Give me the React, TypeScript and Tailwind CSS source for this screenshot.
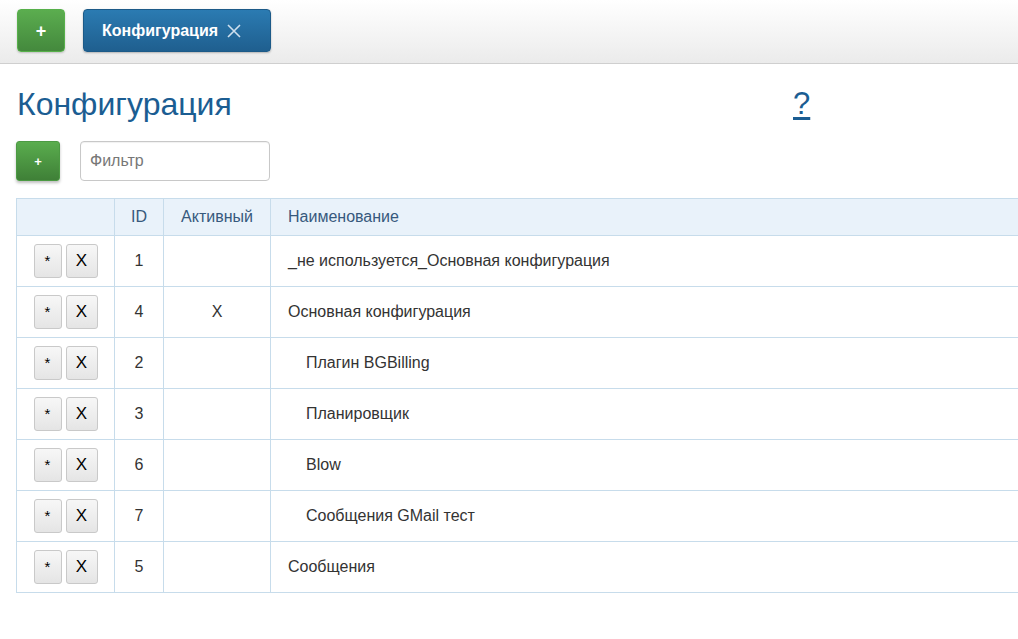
import React from 'react';

interface ConfigRow {
  id: number;
  active: boolean;
  title: string;
  level: number;
}

const rows: ConfigRow[] = [
  { id: 1, active: false, title: '_не используется_Основная конфигурация', level: 0 },
  { id: 4, active: true, title: 'Основная конфигурация', level: 0 },
  { id: 2, active: false, title: 'Плагин BGBilling', level: 1 },
  { id: 3, active: false, title: 'Планировщик', level: 1 },
  { id: 6, active: false, title: 'Blow', level: 1 },
  { id: 7, active: false, title: 'Сообщения GMail тест', level: 1 },
  { id: 5, active: false, title: 'Сообщения', level: 0 },
];

const font = { fontFamily: '"Liberation Sans", Arial, sans-serif' };

const App: React.FC = () => {
  return (
    <div className="w-[1018px] h-[639px] overflow-hidden bg-white text-[#333]" style={font}>
      {/* Top bar with tabs */}
      <div className="h-[64px] bg-gradient-to-b from-white to-[#ebebeb] border-b border-[#cfcfcf] flex items-start pt-[9px] pl-[17px] gap-[18px]">
        <button className="w-[48px] h-[43px] rounded-[4px] bg-gradient-to-b from-[#5bad4f] to-[#44893d] border border-[#57b04a] text-white font-bold text-[18px] leading-none shadow-[0_1px_2px_rgba(0,0,0,0.2)]">
          +
        </button>
        <div className="h-[43px] w-[188px] rounded-[4px] bg-gradient-to-b from-[#2b7bb2] to-[#1f5f8f] border border-[#1c5a88] flex items-center pl-[18px] text-white shadow-[0_1px_2px_rgba(0,0,0,0.25)]">
          <span className="font-bold text-[16px]">Конфигурация</span>
          <svg className="ml-[9px]" width="14" height="14" viewBox="0 0 14 14">
            <path d="M1 1 L13 13 M13 1 L1 13" stroke="#cfe0ee" strokeWidth="1.6" />
          </svg>
        </div>
      </div>

      {/* Heading */}
      <div className="flex items-start pl-[17px] mt-[22px]">
        <h1 className="text-[32px] leading-[36px] text-[#1b5d92] w-[776px]">Конфигурация</h1>
        <a className="text-[31px] leading-[36px] text-[#1b5d92] underline underline-offset-[3px] decoration-[3px]">?</a>
      </div>

      {/* Toolbar */}
      <div className="flex items-center pl-[16px] gap-[20px] mt-[19px]">
        <button className="w-[44px] h-[40px] rounded-[3px] bg-gradient-to-b from-[#5aad4e] to-[#3f8037] border border-[#4c9a43] text-white font-bold text-[13px] leading-none shadow-[0_2px_3px_rgba(0,0,0,0.25)]">
          +
        </button>
        <input
          className="w-[190px] h-[40px] border border-[#c8c8c8] rounded-[4px] px-[9px] text-[16px] outline-none shadow-[inset_0_1px_1px_rgba(0,0,0,0.06)] placeholder:text-[#777]"
          placeholder="Фильтр"
          style={font}
        />
      </div>

      {/* Table */}
      <table className="ml-[16px] mt-[17px] w-[1040px] border-collapse text-[16px]">
        <thead>
          <tr className="bg-[#e9f2fa] h-[37px] text-[#37597d]">
            <th className="w-[98px] border border-[#c7dceb] font-normal"></th>
            <th className="w-[49px] border border-[#c7dceb] font-normal text-center">ID</th>
            <th className="w-[107px] border border-[#c7dceb] font-normal text-center">Активный</th>
            <th className="border border-[#c7dceb] font-normal text-left pl-[17px]">Наименование</th>
          </tr>
        </thead>
        <tbody>
          {rows.map((row) => (
            <tr key={row.id} className="h-[51px]">
              <td className="border border-[#c7dceb]">
                <div className="flex justify-center gap-[4px]">
                  <button className="w-[28px] h-[34px] rounded-[3px] border border-[#c9c9c9] bg-gradient-to-b from-[#f7f7f7] to-[#e5e5e5] text-[15px] text-black">
                    *
                  </button>
                  <button className="w-[32px] h-[34px] rounded-[3px] border border-[#c9c9c9] bg-gradient-to-b from-[#f7f7f7] to-[#e5e5e5] text-[17px] text-black">
                    X
                  </button>
                </div>
              </td>
              <td className="border border-[#c7dceb] text-center">{row.id}</td>
              <td className="border border-[#c7dceb] text-center">{row.active ? 'X' : ''}</td>
              <td className={`border border-[#c7dceb] text-left ${row.level ? 'pl-[35px]' : 'pl-[17px]'}`}>
                {row.title}
              </td>
            </tr>
          ))}
        </tbody>
      </table>
    </div>
  );
};

export default App;
